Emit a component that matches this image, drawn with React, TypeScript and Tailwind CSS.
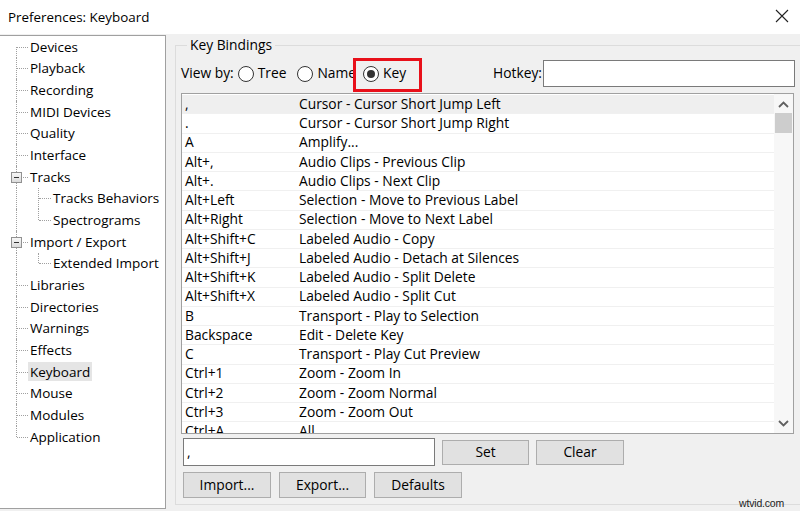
const FONT = "font-['Open_Sans','Noto_Sans',sans-serif]";

type TreeItem = { label: string; level: 0 | 1; box?: boolean; first?: boolean; last?: boolean; selected?: boolean };

const tree: TreeItem[] = [
  { label: "Devices", level: 0, first: true },
  { label: "Playback", level: 0 },
  { label: "Recording", level: 0 },
  { label: "MIDI Devices", level: 0 },
  { label: "Quality", level: 0 },
  { label: "Interface", level: 0 },
  { label: "Tracks", level: 0, box: true },
  { label: "Tracks Behaviors", level: 1 },
  { label: "Spectrograms", level: 1, last: true },
  { label: "Import / Export", level: 0, box: true },
  { label: "Extended Import", level: 1, last: true },
  { label: "Libraries", level: 0 },
  { label: "Directories", level: 0 },
  { label: "Warnings", level: 0 },
  { label: "Effects", level: 0 },
  { label: "Keyboard", level: 0, selected: true },
  { label: "Mouse", level: 0 },
  { label: "Modules", level: 0 },
  { label: "Application", level: 0, last: true },
];

const bindings: [string, string][] = [
  [",", "Cursor - Cursor Short Jump Left"],
  [".", "Cursor - Cursor Short Jump Right"],
  ["A", "Amplify..."],
  ["Alt+,", "Audio Clips - Previous Clip"],
  ["Alt+.", "Audio Clips - Next Clip"],
  ["Alt+Left", "Selection - Move to Previous Label"],
  ["Alt+Right", "Selection - Move to Next Label"],
  ["Alt+Shift+C", "Labeled Audio - Copy"],
  ["Alt+Shift+J", "Labeled Audio - Detach at Silences"],
  ["Alt+Shift+K", "Labeled Audio - Split Delete"],
  ["Alt+Shift+X", "Labeled Audio - Split Cut"],
  ["B", "Transport - Play to Selection"],
  ["Backspace", "Edit - Delete Key"],
  ["C", "Transport - Play Cut Preview"],
  ["Ctrl+1", "Zoom - Zoom In"],
  ["Ctrl+2", "Zoom - Zoom Normal"],
  ["Ctrl+3", "Zoom - Zoom Out"],
  ["Ctrl+A", "All"],
];

function TreeRow({ item }: { item: TreeItem }) {
  const topVertical = item.level === 0
    ? item.first ? "top-1/2 bottom-0" : item.last ? "top-0 h-1/2" : "top-0 bottom-0"
    : "top-0 bottom-0";
  return (
    <div className="flex h-[21.67px] items-center">
      <div className="relative h-full w-[28px] shrink-0">
        <div className={`absolute left-[16px] w-0 border-l border-dotted border-[#a0a0a0] ${topVertical}`} />
        {item.level === 0 && (
          <div className="absolute left-[17px] right-0 top-1/2 border-t border-dotted border-[#a0a0a0]" />
        )}
        {item.box && (
          <div className="absolute left-[11px] top-1/2 -mt-[5px] flex h-[11px] w-[11px] items-center justify-center border border-[#919191] bg-gradient-to-b from-[#f7f7f7] to-[#dcdcdc]">
            <div className="h-px w-[5px] bg-[#333]" />
          </div>
        )}
      </div>
      {item.level === 1 && (
        <div className="relative h-full w-[23px] shrink-0">
          <div className={`absolute left-[10px] w-0 border-l border-dotted border-[#a0a0a0] ${item.last ? "top-0 h-1/2" : "top-0 bottom-0"}`} />
          <div className="absolute left-[11px] right-0 top-1/2 border-t border-dotted border-[#a0a0a0]" />
        </div>
      )}
      <span className={`flex h-[19px] items-center whitespace-nowrap px-[2px] text-[13.5px] text-[#000] ${item.selected ? "bg-[#e5e5e5]" : ""}`}>
        {item.label}
      </span>
    </div>
  );
}

function Radio({ checked, label }: { checked?: boolean; label: string }) {
  return (
    <div className="flex items-center">
      <div className="flex h-[16px] w-[16px] items-center justify-center rounded-full border border-[#333] bg-white">
        {checked && <div className="h-[8px] w-[8px] rounded-full bg-[#333]" />}
      </div>
      <span className="ml-[4px] text-[13.8px]">{label}</span>
    </div>
  );
}

function Button({ label, className }: { label: string; className: string }) {
  return (
    <button className={`flex items-center justify-center border border-[#adadad] bg-[#e1e1e1] text-[13.8px] text-[#000] ${className}`}>
      {label}
    </button>
  );
}

export default function App() {
  return (
    <div className={`relative flex h-[511px] w-[800px] flex-col overflow-hidden bg-[#f0f0f0] text-[#000] ${FONT}`}>
      {/* Title bar */}
      <div className="flex h-[34px] shrink-0 items-center justify-between bg-white pl-[8px] pr-[11px]">
        <span className="text-[13.4px]">Preferences: Keyboard</span>
        <svg width="14" height="14" viewBox="0 0 14 14" className="mb-[3px]">
          <path d="M1 1 L13 13 M13 1 L1 13" stroke="#222" strokeWidth="1.1" />
        </svg>
      </div>

      <div className="flex flex-1 pt-[1px]">
        {/* Tree */}
        <div className="h-[474px] w-[166px] shrink-0 border border-l-0 border-[#a0a0a0] bg-white">
          {tree.map((t) => (
            <TreeRow key={t.label} item={t} />
          ))}
        </div>

        {/* Right panel */}
        <div className="flex-1 pl-[9px]">
          <fieldset className="relative mt-[1px] h-[469px] border border-r-0 border-[#dcdcdc] px-[5px]">
            <legend className="ml-[6px] px-[3px] text-[13.8px] leading-[18px]">Key Bindings</legend>

            <div className="relative mt-[6px] flex h-[27px] items-center">
              <span className="text-[13.8px]">View by:</span>
              <div className="ml-[4px]"><Radio label="Tree" /></div>
              <div className="ml-[11px]"><Radio label="Name" /></div>
              <div className="ml-[7px]"><Radio checked label="Key" /></div>
              <span className="ml-auto text-[13.8px]">Hotkey:</span>
              <div className="ml-px h-[27px] w-[252px] border border-[#7a7a7a] bg-white" />
              <div className="absolute left-[172px] top-[-2px] h-[34px] w-[69px] border-[3px] border-[#e8101a]" />
            </div>

            {/* Bindings list */}
            <div className="mr-[1px] mt-[6px] flex h-[341px] border border-[#a0a0a0] bg-white">
              <div className="flex-1 overflow-hidden pt-px">
                {bindings.map(([k, v], i) => (
                  <div
                    key={k}
                    className={`flex h-[19.25px] items-center border-b border-[#f0f0f0] text-[13.8px] ${i === 0 ? "bg-[#efefef]" : ""}`}
                  >
                    <span className="w-[117px] shrink-0 whitespace-nowrap pl-[3px]">{k}</span>
                    <span className="whitespace-nowrap">{v}</span>
                  </div>
                ))}
              </div>
              <div className="flex w-[19px] flex-col items-center bg-[#f7f7f7] pt-[7px] pb-[6px]">
                <svg width="11" height="7" viewBox="0 0 11 7">
                  <path d="M1 6 L5.5 1.5 L10 6" fill="none" stroke="#606060" strokeWidth="1.8" />
                </svg>
                <div className="mt-[5px] h-[20px] w-[17px] bg-[#cdcdcd]" />
                <div className="flex-1" />
                <svg width="11" height="7" viewBox="0 0 11 7">
                  <path d="M1 1 L5.5 5.5 L10 1" fill="none" stroke="#606060" strokeWidth="1.8" />
                </svg>
              </div>
            </div>

            <div className="mt-[4px] flex h-[28px] items-center">
              <div className="ml-[2px] flex h-[28px] w-[252px] items-center border border-[#7a7a7a] bg-white pl-[3px] text-[13.8px]">,</div>
              <Button label="Set" className="ml-[7px] h-[25px] w-[87px]" />
              <Button label="Clear" className="ml-[7px] h-[25px] w-[88px]" />
            </div>

            <div className="mt-[6px] flex h-[26px] items-center">
              <Button label="Import..." className="ml-[2px] h-[26px] w-[88px]" />
              <Button label="Export..." className="ml-[8px] h-[26px] w-[87px]" />
              <Button label="Defaults" className="ml-[8px] h-[26px] w-[88px]" />
            </div>
          </fieldset>
        </div>
      </div>

      <span className="absolute right-[16px] bottom-[2px] font-['Liberation_Sans',sans-serif] text-[10.5px] leading-[12px] tracking-[-0.2px] text-[#222]">wtvid.com</span>
    </div>
  );
}
